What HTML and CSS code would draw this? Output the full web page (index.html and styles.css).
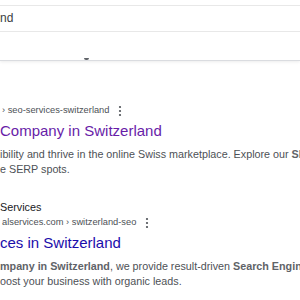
FILE: index.html
```html
<!DOCTYPE html>
<html>
    <head>
        <meta charset="utf-8">
        <meta name="viewport" content="initial-scale=1, width=device-width">
        <title>seo company switzerland - Search</title>
        <link rel="stylesheet" href="styles.css">
    </head>
    <body>
    <header class="header">
        <div class="query">nd</div>
        <div class="tabs"><span class="tab-mark"></span></div>
    </header>
    <main class="results">
        <div class="result">
            <div class="site-name"></div>
            <div class="cite">› seo-services-switzerland
                <svg class="more" width="4" height="12" viewBox="0 0 4 12"><circle cx="2" cy="2" r="1.1"/><circle cx="2" cy="6" r="1.1"/><circle cx="2" cy="10" r="1.1"/></svg>
            </div>
            <a class="title visited" href="#">Company in Switzerland</a>
            <div class="snippet">ibility and thrive in the online Swiss marketplace. Explore our <b>SEO services</b><br>e SERP spots.</div>
        </div>
        <div class="result">
            <div class="site-name">Services</div>
            <div class="cite">alservices.com › switzerland-seo
                <svg class="more" width="4" height="12" viewBox="0 0 4 12"><circle cx="2" cy="2" r="1.1"/><circle cx="2" cy="6" r="1.1"/><circle cx="2" cy="10" r="1.1"/></svg>
            </div>
            <a class="title" href="#">ces in Switzerland</a>
            <div class="snippet"><b>mpany in Switzerland</b>, we provide result-driven <b>Search Engine Optimization</b><br>oost your business with organic leads.</div>
        </div>
    </main>
    </body>
</html>
```

FILE: styles.css
```css
body {
    margin: 0;
    width: 300px;
    height: 300px;
    overflow: hidden;
    background-color: #ffffff;
    font-family: "Liberation Sans", Arial, sans-serif;
    white-space: nowrap;
}
.header {
    padding-top: 5px;
    border-bottom: 1px solid #dadce0;
    box-shadow: 0 1px 3px rgba(0, 0, 0, 0.08);
}
.query {
    height: 25px;
    line-height: 25px;
    font-size: 12px;
    color: #3c4043;
    border-top: 1px solid #e8e8e8;
    border-bottom: 1px solid #e8e8e8;
}
.tabs {
    height: 28px;
    position: relative;
}
.tab-mark {
    position: absolute;
    left: 84px;
    bottom: 0;
    width: 5px;
    height: 2px;
    background-color: #5f6368;
    border-radius: 0 0 2px 2px;
}
.results {
    padding-top: 27px;
}
.result {
    margin-bottom: 23px;
}
.site-name {
    height: 15px;
    line-height: 15px;
    font-size: 10.8px;
    color: #202124;
}
.cite {
    display: flex;
    align-items: center;
    height: 15px;
    line-height: 15px;
    font-size: 9.3px;
    color: #4d5156;
    padding-left: 2px;
}
.more {
    margin-left: 9px;
    fill: #4d5156;
}
.title {
    display: block;
    margin-top: 3px;
    line-height: 20px;
    font-size: 15px;
    color: #1a0dab;
    text-decoration: none;
}
.title.visited {
    color: #681da8;
}
.snippet {
    margin-top: 6px;
    line-height: 15px;
    font-size: 10.75px;
    color: #4d5156;
}
.snippet b {
    color: #5f6368;
}
```
